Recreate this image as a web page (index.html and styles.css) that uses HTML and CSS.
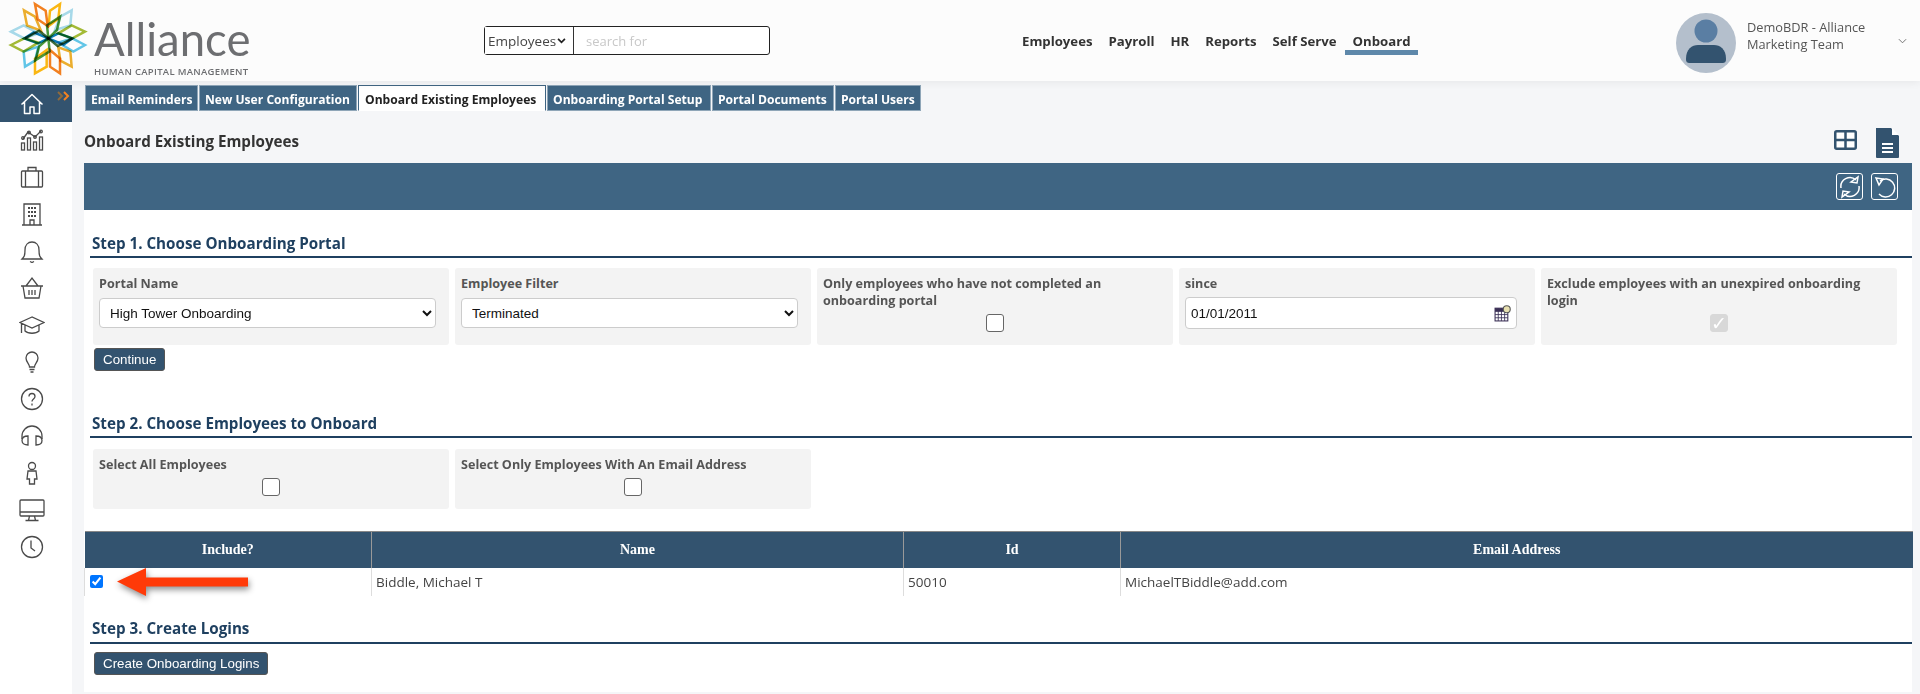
FILE: index.html
```html
<!DOCTYPE html>
<html lang="en">
<head>
<meta charset="utf-8">
<title>Onboard Existing Employees</title>
<link rel="stylesheet" href="styles.css">
</head>
<body>
<header class="topbar">
  <div class="brand">
    <svg class="flower" viewBox="0 0 270 240" width="90" height="80" fill="none" stroke-width="7.500">
      <path stroke="#f58220" d="M90 12L122 32 128 78 98 58Z"/>
      <path stroke="#fdb913" d="M165 12L135 32 131 78 160 56Z"/>
      <path stroke="#eeb02e" d="M57 31L90 50 108 92 66 76Z"/>
      <path stroke="#a9dcec" d="M200 31L166 50 150 90 196 76Z"/>
      <path stroke="#a9dcec" d="M18 95L56 76 100 100 58 115Z"/>
      <path stroke="#a5bc36" d="M240 95L200 76 160 100 202 115Z"/>
      <path stroke="#a5bc36" d="M18 135L58 115 100 128 56 155Z"/>
      <path stroke="#62c8ea" d="M240 135L202 115 160 128 205 155Z"/>
      <path stroke="#62c8ea" d="M60 200L56 155 100 140 90 182Z"/>
      <path stroke="#eeb02e" d="M200 200L196 155 160 142 166 182Z"/>
      <path stroke="#fdb913" d="M90 220L90 176 125 150 125 200Z"/>
      <path stroke="#f58220" d="M165 220L165 176 135 150 135 200Z"/>
      <path stroke="#0a7fb8" d="M130 115L100 130 58 115 86 97Z"/>
      <path stroke="#0a7fb8" d="M130 115L160 100 202 115 176 134Z"/>
      <path stroke="#4b9a3a" d="M130 115L126 76 165 50 156 90Z"/>
      <path stroke="#4b9a3a" d="M130 115L134 154 92 180 102 140Z"/>
      <path stroke="#3d6d3c" d="M130 115L102 92 60 115M130 115L158 138 202 115"/>
    </svg>
    <div class="wordmark">
      <span class="wordmark-name">Alliance</span>
      <span class="wordmark-sub">HUMAN CAPITAL MANAGEMENT</span>
    </div>
  </div>
  <div class="search">
    <div class="scope-wrap">
      <select class="search-scope"><option>Employees</option></select>
      <svg class="scope-chev" viewBox="0 0 10 7" width="9" height="6" fill="none" stroke="#222" stroke-width="2"><path d="M1 1l4 4 4-4"/></svg>
    </div>
    <input class="search-input" type="text" placeholder="search for">
  </div>
  <nav class="mainnav">
    <a>Employees</a><a>Payroll</a><a>HR</a><a>Reports</a><a>Self Serve</a><a class="current">Onboard</a>
  </nav>
  <div class="user">
    <svg class="avatar" viewBox="0 0 60 60" width="60" height="60">
      <circle cx="30" cy="30" r="30" fill="#b4bfcc"/>
      <circle cx="30" cy="18" r="11.5" fill="#5a7ea3"/>
      <path fill="#33536f" d="M10 46c0-10 6-14 12-14h16c6 0 12 4 12 14 0 3-1 4-4 4H14c-3 0-4-1-4-4Z"/>
    </svg>
    <div class="user-name">DemoBDR - Alliance<br>Marketing Team</div>
    <svg class="chev" viewBox="0 0 10 6" width="9" height="6" fill="none" stroke="#666" stroke-width="1"><path d="M1 1l4 4 4-4"/></svg>
  </div>
</header>

<div class="layout">
  <aside class="sidebar">
    <div class="side-home">
      <svg viewBox="0 0 24 24" width="24" height="24" fill="none" stroke="#fff" stroke-width="1.5" stroke-linejoin="round"><path d="M1.5 12.5L12 2.5l10.500 10M4.500 10v11.500h5.500V15h4v6.500h5.500V10"/></svg>
      <svg class="side-expand" viewBox="0 0 13 10" width="13" height="10" fill="none" stroke-width="2"><path stroke="#8f6a3c" d="M1 1l4 4-4 4"/><path stroke="#f58220" d="M7 1l4 4-4 4"/></svg>
    </div>
    <div class="side-icons">
      <svg viewBox="0 0 24 24" width="24" height="24"><path d="M3 11L8 4l7 5 6-6"/><circle cx="3" cy="10" r="1.300"/><circle cx="9" cy="4.500" r="1.300"/><circle cx="15" cy="9" r="1.300"/><circle cx="21" cy="3.500" r="1.300"/><rect x="1.500" y="15" width="3" height="7"/><rect x="7.500" y="10" width="3" height="12"/><rect x="13.500" y="14" width="3" height="8"/><rect x="19.500" y="9" width="3" height="13"/></svg>
      <svg viewBox="0 0 24 24" width="24" height="24"><rect x="1.500" y="6" width="21" height="16" rx="1"/><path d="M8 6V2.500h8V6M5.500 6v16M18.500 6v16"/></svg>
      <svg viewBox="0 0 24 24" width="24" height="24"><path d="M4 23V2h16v21M2 23h20M10 23v-5h4v5"/><path class="dots" d="M8 5h2v2H8zM14 5h2v2h-2zM11 5h2v2h-2zM8 9h2v2H8zM11 9h2v2h-2zM14 9h2v2h-2zM8 13h2v2H8zM11 13h2v2h-2zM14 13h2v2h-2z"/></svg>
      <svg viewBox="0 0 24 24" width="24" height="24"><path d="M2 20c2-2 3-3 3-9 0-5 3-8 7-8s7 3 7 8c0 6 1 7 3 9ZM10 22.500l2 1 2-1"/></svg>
      <svg viewBox="0 0 24 24" width="24" height="24"><path d="M1 10h22M3 10l2 12h14l2-12M6 10l6-8 6 8M9 14v5M12 14v5M15 14v5"/></svg>
      <svg viewBox="0 0 26 24" width="26" height="24"><path d="M13 4L1 9.500 13 15l12-5.500ZM6 12v6c3 3 11 3 14 0v-6M2.500 10.500V20"/></svg>
      <svg viewBox="0 0 24 24" width="24" height="24"><path d="M9.500 17c0-3-3.500-5-3.500-9a6 6 0 0 1 12 0c0 4-3.500 6-3.500 9ZM9.500 19.500h5M10.500 22h3"/></svg>
      <svg viewBox="0 0 24 24" width="24" height="24"><circle cx="12" cy="12" r="10.500"/><path d="M9 9.500c0-4 6-4 6 0 0 2.500-3 2.500-3 5M12 16.500v2"/></svg>
      <svg viewBox="0 0 24 24" width="24" height="24"><path d="M2 15v-3a10 10 0 0 1 20 0v3"/><path d="M8 12v9c-3 0-6-1-6-4.500S5 12 8 12ZM16 12v9c3 0 6-1 6-4.500S19 12 16 12Z"/></svg>
      <svg viewBox="0 0 24 24" width="24" height="24"><circle cx="12" cy="5" r="3.500"/><path d="M8 10h8l1 8h-2.500v5h-5v-5H7Z"/></svg>
      <svg viewBox="0 0 26 24" width="26" height="24"><rect x="1" y="2" width="24" height="16" rx="1"/><path d="M1 14h24M10.500 18l-1 4.500M15.500 18l1 4.500M6.500 22.500h13"/></svg>
      <svg viewBox="0 0 24 24" width="24" height="24"><circle cx="12" cy="12" r="10.500"/><path d="M11 5.500V13l4 3"/></svg>
    </div>
  </aside>

  <main class="main">
    <div class="tabs">
      <a class="tab tab-1">Email Reminders</a>
      <a class="tab tab-2">New User Configuration</a>
      <a class="tab tab-3 active">Onboard Existing Employees</a>
      <a class="tab tab-4">Onboarding Portal Setup</a>
      <a class="tab tab-5">Portal Documents</a>
      <a class="tab tab-6">Portal Users</a>
    </div>
    <div class="titlebar">
      <h1>Onboard Existing Employees</h1>
      <div class="view-icons">
        <svg viewBox="0 0 23 20" width="23" height="20"><rect x="1.250" y="1.250" width="20.500" height="17.500" rx="1.500" fill="#fff" stroke="#33536f" stroke-width="2.500"/><path d="M11.500 1v18M1 10h21" stroke="#33536f" stroke-width="2.500"/></svg>
        <svg viewBox="0 0 23 30" width="23" height="30"><path fill="#33536f" d="M0 0h15l8 8v21a1 1 0 0 1-1 1H1a1 1 0 0 1-1-1Z"/><path fill="#fff" d="M16 0l7 7h-7Z M6 15h11v2H6zM6 19h11v2H6zM6 23h11v2H6z"/></svg>
      </div>
    </div>
    <div class="panel">
      <div class="actionbar">
        <span class="action-btn"><svg viewBox="0 0 24 24" width="24" height="24" fill="none" stroke="#fff" stroke-width="1.500"><path d="M3 13A9 9 0 0 1 18 5M21 11a9 9 0 0 1-15 8"/><path d="M20 2l-1 6-6-1ZM4 22l1-6 6 1Z"/></svg></span>
        <span class="action-btn"><svg viewBox="0 0 24 24" width="24" height="24" fill="none" stroke="#fff" stroke-width="1.500"><path d="M7 6a9 9 0 1 1-1 13"/><path d="M3 3l7 1-4 6Z"/></svg></span>
      </div>

      <section class="step step-one">
        <h2>Step 1. Choose Onboarding Portal</h2>
        <div class="fields">
          <div class="field"><label>Portal Name</label><select class="control"><option>High Tower Onboarding</option></select></div>
          <div class="field"><label>Employee Filter</label><select class="control"><option>Terminated</option></select></div>
          <div class="field"><label>Only employees who have not completed an onboarding portal</label><input class="check" type="checkbox"></div>
          <div class="field"><label>since</label>
            <div class="date control">01/01/2011
              <svg viewBox="0 0 16 16" width="17" height="17"><rect x="1" y="3" width="12" height="12" fill="#fff" stroke="#3a2f55"/><path d="M1 6h12M1 9h12M1 12h12M4 3v12M7 3v12M10 3v12" stroke="#3a2f55" stroke-width=".8"/><rect x="1" y="3" width="12" height="3" fill="#3a2f55"/><circle cx="12" cy="4" r="3.300" fill="#e8e0b0" stroke="#555"/></svg>
            </div>
          </div>
          <div class="field"><label>Exclude employees with an unexpired onboarding login</label><input class="check" type="checkbox" checked disabled></div>
        </div>
        <button class="btn" type="button">Continue</button>
      </section>

      <section class="step step-two">
        <h2>Step 2. Choose Employees to Onboard</h2>
        <div class="fields">
          <div class="field short"><label>Select All Employees</label><input class="check" type="checkbox"></div>
          <div class="field short"><label>Select Only Employees With An Email Address</label><input class="check" type="checkbox"></div>
        </div>
      </section>

      <table class="grid">
        <colgroup><col class="c1"><col class="c2"><col class="c3"><col class="c4"></colgroup>
        <thead><tr><th>Include?</th><th>Name</th><th>Id</th><th>Email Address</th></tr></thead>
        <tbody><tr><td class="inc"><input type="checkbox" checked></td><td>Biddle, Michael T</td><td>50010</td><td>MichaelTBiddle@add.com</td></tr></tbody>
      </table>

      <section class="step step-three">
        <h2>Step 3. Create Logins</h2>
        <button class="btn" type="button">Create Onboarding Logins</button>
      </section>

      <svg class="arrow" viewBox="0 0 140 36" width="140" height="36"><path fill="#ff3a08" d="M1 14.500L30 1v9.500h102v9H30V29Z"/></svg>
    </div>
  </main>
</div>
</body>
</html>
```
FILE: styles.css
```css
* { box-sizing: border-box; }
html, body { margin: 0; height: 694px; overflow: hidden; }
body { background: #f5f6f8; font-family: "Open Sans", "Noto Sans", sans-serif; color: #333; }

.topbar { height: 81px; background: #fcfcfc; display: flex; align-items: flex-start; box-shadow: 0 2px 8px rgba(0,0,0,.06); position: relative; }
.brand { width: 484px; flex: none; display: flex; padding: 0 0 0 5px; }
.flower { flex: none; }
.flower path { mix-blend-mode: multiply; }
.wordmark { display: flex; flex-direction: column; margin-left: -1px; color: #6d6e71; }
.wordmark-name { font: 400 45.500px/50px Lato, sans-serif; margin-top: 14px; height: 50px; }
.wordmark-sub { font: 600 9.500px/12px "Open Sans", sans-serif; letter-spacing: .3px; margin-top: 2px; white-space: nowrap; }

.search { width: 286px; height: 29px; margin-top: 26px; border: 1px solid #222; border-radius: 3px; display: flex; flex: none; background: #fff; }
.scope-wrap { position: relative; width: 89px; flex: none; }
.search-scope { width: 100%; height: 100%; appearance: none; border: 0; border-right: 1px solid #333; background: #fff; font: 13.500px "Open Sans", sans-serif; color: #444; padding: 0 0 0 3px; }
.scope-chev { position: absolute; right: 8px; top: 11px; pointer-events: none; }
.search-input { flex: 1; min-width: 0; border: 0; background: transparent; font: 13px "Open Sans", sans-serif; padding: 0 12px; outline: 0; }
.search-input::placeholder { color: #c8c8c8; }

.mainnav { display: flex; margin: 32px 0 0 244px; flex: none; }
.mainnav a { font-size: 13.200px; font-weight: 700; color: #333; line-height: 19px; height: 23px; padding: 0 8px; white-space: nowrap; }
.mainnav a.current { border-bottom: 5px solid #5e88aa; }

.user { position: absolute; left: 1676px; top: 13px; display: flex; width: 236px; }
.avatar { flex: none; }
.user-name { font: 12.800px/17px "Open Sans", sans-serif; color: #555; margin: 6px 0 0 11px; width: 145px; }
.chev { margin: 25px 0 0 6px; }

.layout { display: flex; height: 613px; }
.sidebar { width: 72px; flex: none; margin-top: 4px; background: #fff; }
.side-home { height: 37px; background: #33536f; position: relative; display: flex; align-items: center; justify-content: center; padding-right: 8px; }
.side-expand { position: absolute; left: 57px; top: 6px; }
.side-icons { display: flex; flex-direction: column; align-items: center; gap: 13px; padding: 5.500px 8px 0 0; }
.side-icons svg { fill: none; stroke: #4a4a4a; stroke-width: 1.300; }
.side-icons .dots { fill: #4a4a4a; stroke: none; }

.main { flex: 1; min-width: 0; padding: 4px 8px 0 12px; }
.tabs { display: flex; gap: 1px; height: 26px; margin-left: 1px; }
.tab { background: #3f6583; color: #fff; font-size: 12.100px; font-weight: 700; height: 26px; line-height: 27px; padding: 0 5px; white-space: nowrap; border: 1px solid #8fa6b8; }
.tab-1 { width: 113px; } .tab-2 { width: 158px; } .tab-3 { width: 188px; padding: 0 6px; } .tab-4 { width: 164px; } .tab-5 { width: 122px; } .tab-6 { width: 86px; }
.tab.active { background: #fff; color: #222; border-color: #3f6583; border-bottom-color: #fff; }
.titlebar { height: 52px; display: flex; justify-content: space-between; }
.titlebar h1 { margin: 19px 0 0; font-size: 15.200px; line-height: 22px; font-weight: 700; color: #333; }
.view-icons { display: flex; gap: 19px; padding: 17px 13px 0 0; align-items: flex-start; }
.view-icons svg:first-child { margin-top: 2px; }

.panel { background: #fff; height: 529px; position: relative; }
.actionbar { height: 47px; background: #3f6583; display: flex; justify-content: flex-end; gap: 8px; padding: 10px 14px 0 0; }
.action-btn { width: 27px; height: 27px; border: 1px solid #fff; border-radius: 3px; display: flex; align-items: center; justify-content: center; }

.step { margin-left: 6px; }
.step h2 { margin: 0; font-size: 15.200px; line-height: 23px; font-weight: 700; color: #1f4060; border-bottom: 2px solid #1f4060; height: 26px; padding: 0 0 1px 2px; }
.step-one { padding-top: 22px; height: 202px; }
.step-two { height: 119px; }
.step-two .fields { margin-top: 11px; }
.step-two .field { height: 60px; }
.step-three { padding-top: 22px; }
.step-three h2 { line-height: 21px; }

.fields { display: flex; gap: 6px; margin: 10px 0 3px 3px; }
.field { width: 356px; height: 77px; background: #f3f3f3; border-radius: 3px; padding: 7px 6px 0; display: flex; flex-direction: column; }
.field label { font-size: 12.600px; font-weight: 700; line-height: 17px; color: #555; }
.control { width: 337px; height: 30px; border: 1px solid #ccc; border-radius: 4px; background: #fff; margin-top: 6px; font: 13.500px "Liberation Sans", sans-serif; color: #111; padding: 0 6px; flex: none; }
.date { display: flex; align-items: center; justify-content: space-between; padding: 0 5px 0 5px; width: 332px; height: 32px; margin-top: 5px; }
.check { width: 18px; height: 18px; align-self: center; margin: 5px 0 0; flex: none; appearance: none; background: #fff; border: 1px solid #666; border-radius: 3px; position: relative; }
.check:checked { background: #d8d8d8; border-color: #d8d8d8; }
.check:checked::after { content: "✓"; position: absolute; inset: 0; color: #fff; font: 700 19px/17px "DejaVu Sans", sans-serif; text-align: center; }

.btn { display: block; height: 23px; margin: 0 0 0 4px; padding: 0 8px; background: #33536f; color: #fff; border: 1px solid #555; border-radius: 3px; font: 13.333px "Liberation Sans", sans-serif; }
.step-three .btn { margin-top: 8px; }

.grid { width: 1828px; border-collapse: collapse; table-layout: fixed; }
.c1 { width: 287px; } .c2 { width: 532px; } .c3 { width: 217px; } .c4 { width: 792px; }
.grid th { height: 36px; background: #33536f; color: #fff; font: 700 14px "Liberation Serif", serif; border-top: 1px solid #888; border-left: 1px solid #999; padding: 0; }
.grid th:first-child { border-left: 0; }
.grid td { height: 28px; padding: 1px 4px 0; font-size: 13.500px; color: #444; border-left: 1px solid #ddd; line-height: 27px; }
.grid td.inc { padding: 0 0 1px 5px; }
.inc input { width: 13px; height: 13px; margin: 0; display: block; accent-color: #0075ff; }

.arrow { position: absolute; left: 32px; top: 404px; filter: drop-shadow(1px 3px 3px rgba(0,0,0,.45)); }
```
